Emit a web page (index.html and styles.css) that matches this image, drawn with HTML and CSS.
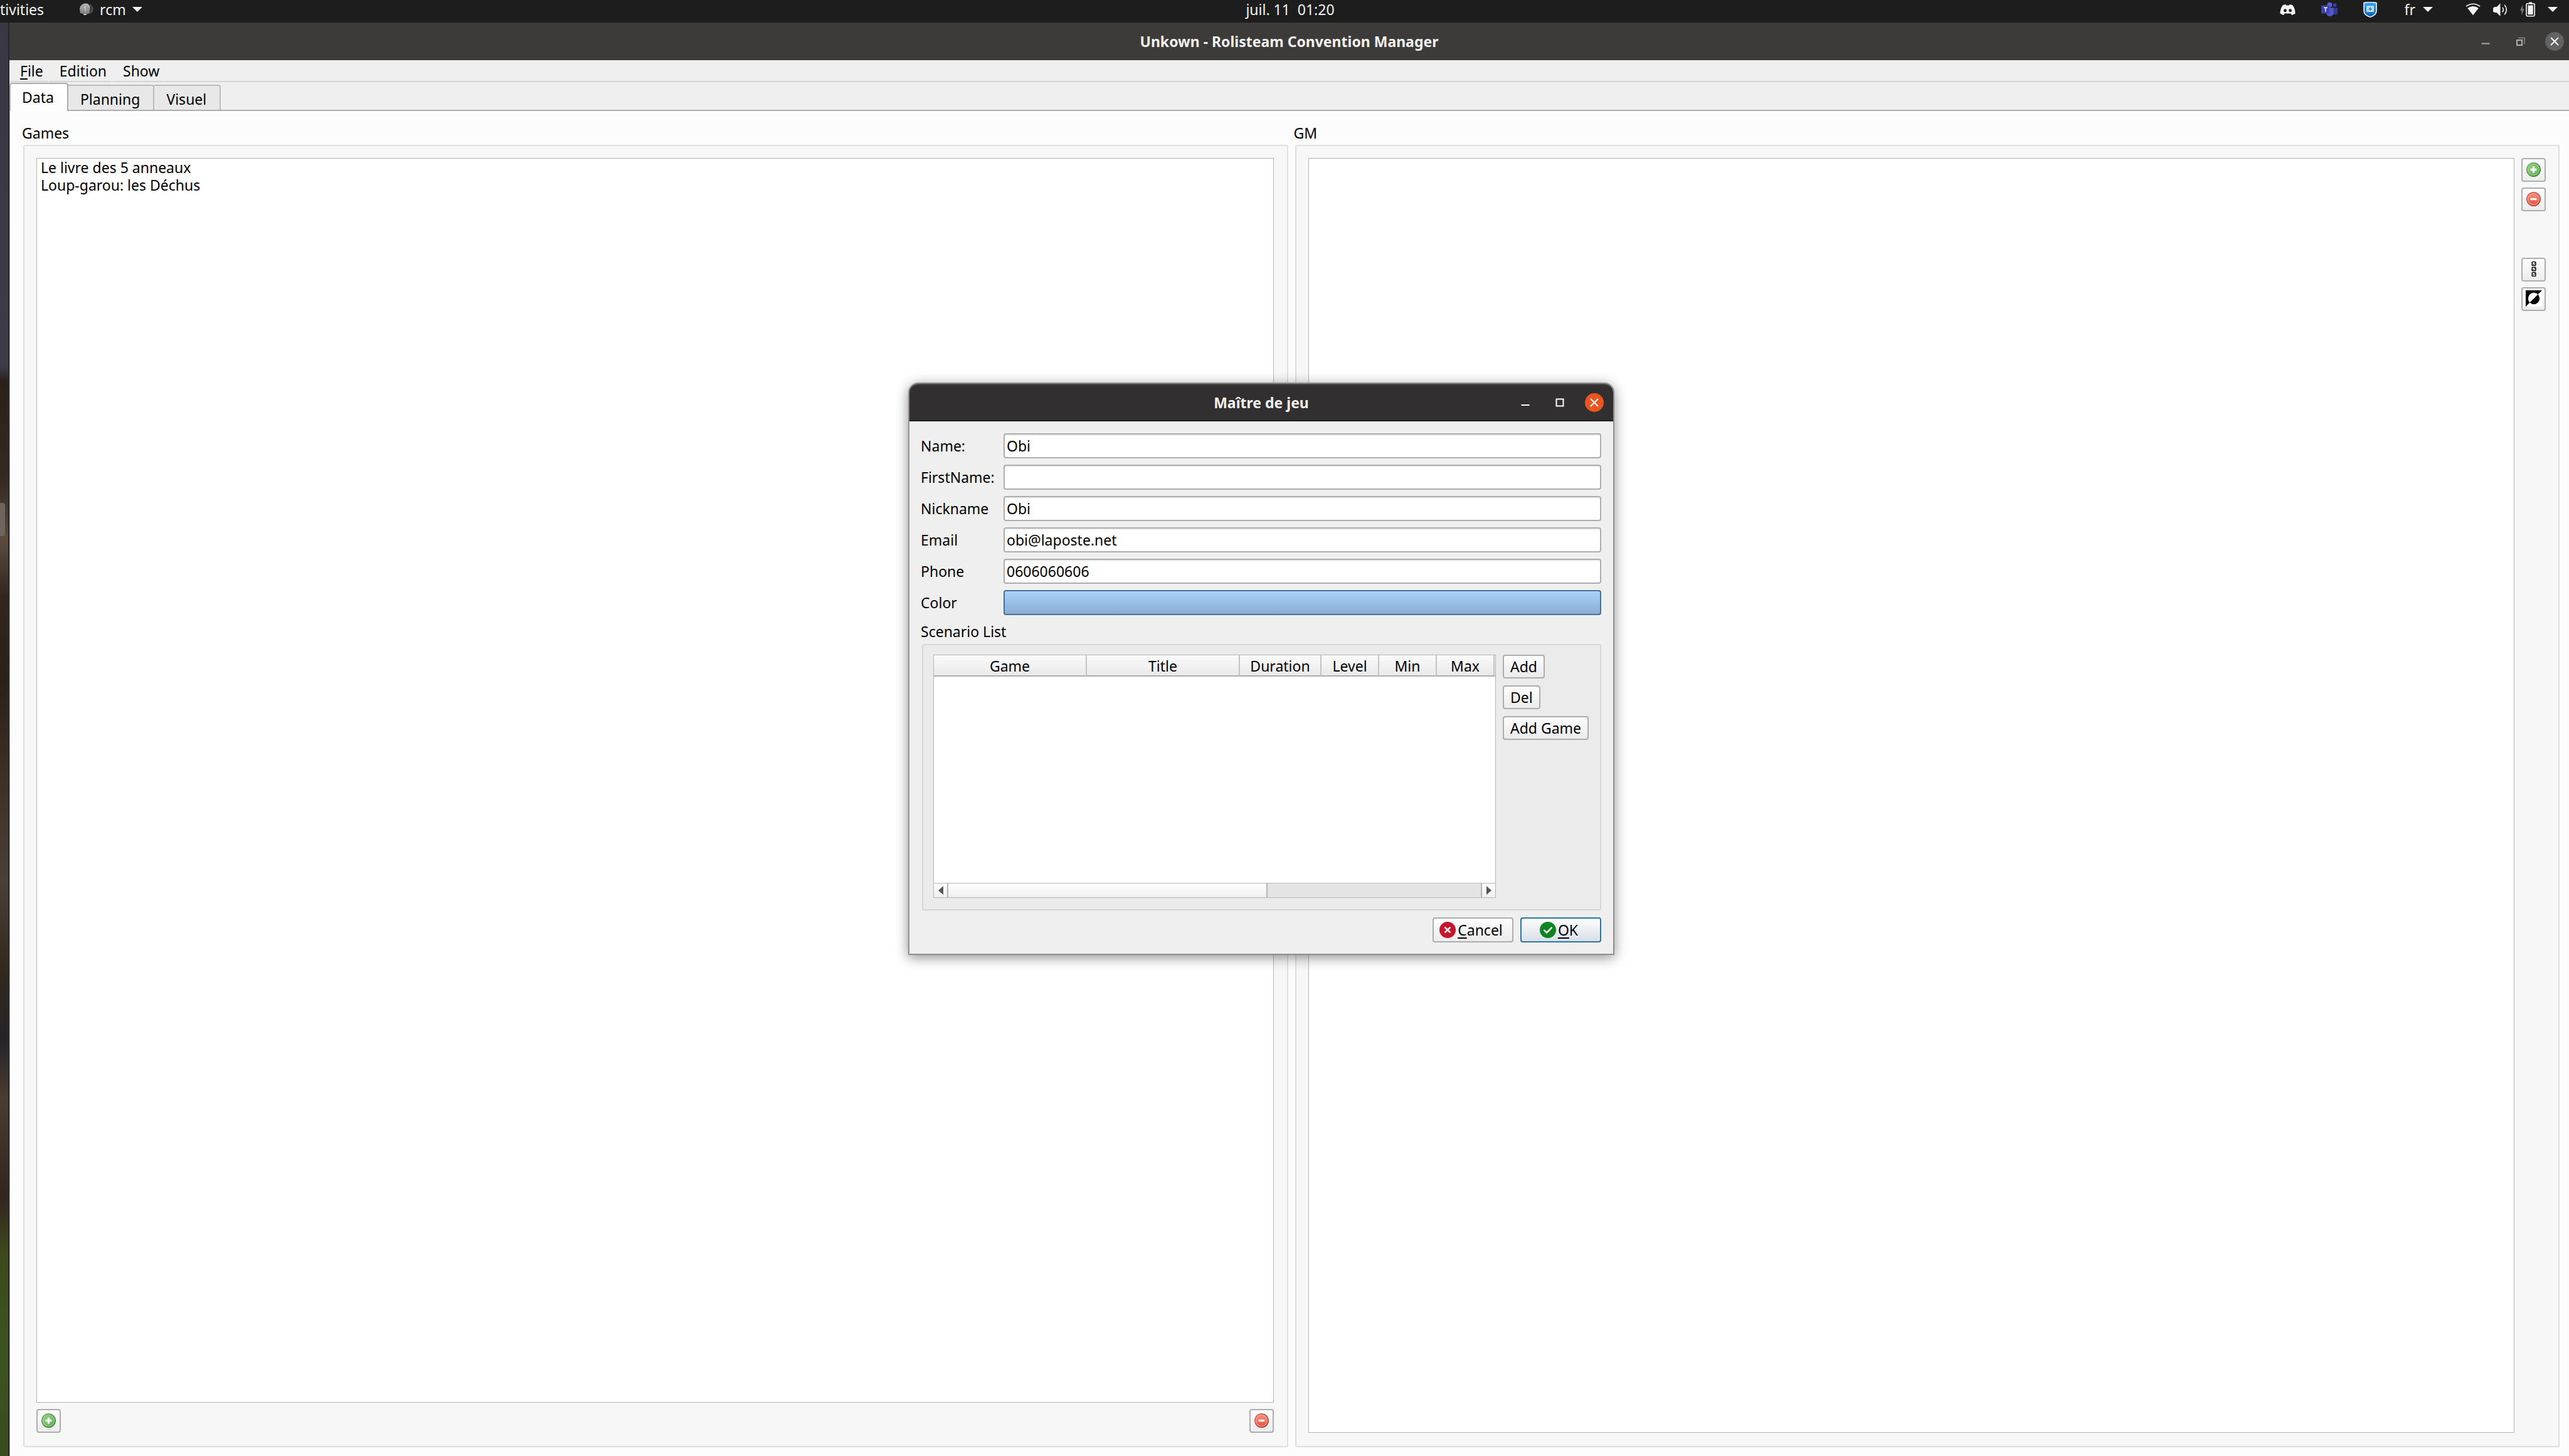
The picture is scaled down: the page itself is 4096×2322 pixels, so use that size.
FILE: index.html
```html
<!DOCTYPE html>
<html lang="fr">
<head>
<meta charset="utf-8">
<title>Unkown - Rolisteam Convention Manager</title>
<link rel="stylesheet" href="styles.css">
</head>
<body>
<svg class="defs" aria-hidden="true">
  <defs>
    <linearGradient id="green" x1="0" y1="0" x2="1" y2="1"><stop offset="0" stop-color="#7cb86c"/><stop offset="1" stop-color="#2f7d2a"/></linearGradient>
    <linearGradient id="green-in" x1="0" y1="0" x2="1" y2="1"><stop offset="0" stop-color="#8fcf84"/><stop offset="1" stop-color="#5fb04c"/></linearGradient>
    <linearGradient id="red" x1="0" y1="0" x2="1" y2="1"><stop offset="0" stop-color="#ee6a66"/><stop offset="1" stop-color="#b03a26"/></linearGradient>
    <linearGradient id="red-in" x1="0" y1="0" x2="0" y2="1"><stop offset="0" stop-color="#f9927c"/><stop offset="1" stop-color="#e8503f"/></linearGradient>
    <linearGradient id="shield" x1="0" y1="0" x2="0" y2="1"><stop offset="0" stop-color="#3aa8f4"/><stop offset="1" stop-color="#0a5fae"/></linearGradient>
    <linearGradient id="bell" x1="0" y1="0" x2="0" y2="1"><stop offset="0" stop-color="#b4b4b4"/><stop offset="1" stop-color="#777"/></linearGradient>
    <symbol id="plus" viewBox="0 0 28 28">
      <circle cx="14" cy="14" r="14" fill="url(#green)"/>
      <circle cx="14" cy="14" r="11" fill="url(#green-in)" stroke="#a8dc9c" stroke-width="1.300"/>
      <path d="M12 8h4v4h4v4h-4v4h-4v-4H8v-4h4z" fill="#fff"/>
    </symbol>
    <symbol id="minus" viewBox="0 0 28 28">
      <circle cx="14" cy="14" r="14" fill="url(#red)"/>
      <circle cx="14" cy="14" r="11" fill="url(#red-in)" stroke="#f9b4aa" stroke-width="1.300"/>
      <path d="M8 12h12v4H8z" fill="#fff"/>
    </symbol>
    <symbol id="caret" viewBox="0 0 16 8"><path d="M0 0h16L8 8z" fill="#f2f2f2"/></symbol>
  </defs>
</svg>

<div class="desktop">
  <header class="topbar">
    <div class="topbar-left">
      <span class="activities">tivities</span>
      <span class="app-menu">
        <svg class="app-icon" viewBox="0 0 27 24">
          <path d="M13 2l9 0 5 7-1 8-6 4h-6z" fill="#444"/>
          <path d="M5 3l5-3 6 1 4 5-1 13-4 2-2 2h-4l-2-2-6-2-1-8 2-5z" fill="url(#bell)"/>
          <path d="M1 10c1-6 3-8 7-8M12 2c4 1 6 3 7 8" fill="none" stroke="#d8d8d8" stroke-width="1" stroke-dasharray="2 1"/>
          <path d="M8 9l3-2v9" fill="none" stroke="#eee" stroke-width="1"/>
          <path d="M8 21h4v2H8z" fill="#eee"/>
        </svg>
        <span>rcm</span>
        <svg class="caret"><use href="#caret"/></svg>
      </span>
    </div>
    <time class="clock">juil. 11&nbsp; 01:20</time>
    <div class="topbar-right">
      <div class="tray">
        <svg class="discord" viewBox="0 0 30 21"><path d="M5 2Q8 0 11 0l1 2h6l1-2q3 0 6 2 5 8 5 16-3 2-7 3l-2-3H9l-2 3q-4-1-7-3Q0 10 5 2z" fill="#f4f4f4"/><circle cx="10" cy="12" r="3" fill="#1d1d1d"/><circle cx="20" cy="12" r="3" fill="#1d1d1d"/></svg>
        <svg class="teams" viewBox="0 0 32 28"><circle cx="26.500" cy="5.500" r="3.500" fill="#3a40a0"/><path d="M20 11h12v9q0 4-5 4h-7z" fill="#343a96"/><circle cx="16.500" cy="5" r="5" fill="#5a60d0"/><path d="M10 11h14v9q0 7-7 7.500-7-.5-7-7.500z" fill="#5158cc"/><rect y="6" width="16" height="16" rx="1" fill="#3c42b4"/><path d="M5 10.500h7M8.500 10.500v8" stroke="#fff" stroke-width="1.800" fill="none"/></svg>
        <svg class="shield" viewBox="0 0 26 30"><path d="M1 2Q13-1 25 2v15q0 8-12 12Q1 25 1 17z" fill="url(#shield)" stroke="#dff0fc" stroke-width="2"/><path d="M7 8.500h12v10H7zM7 12h12M7 15.500h12M11 8.500v10M15.500 8.500v10" fill="none" stroke="#fff" stroke-width="1.600"/><path d="M11 11.500h4.500v4H11z" fill="#1a78c8"/></svg>
      </div>
      <div class="lang"><span>fr</span><svg class="caret"><use href="#caret"/></svg></div>
      <div class="system">
        <svg class="wifi" viewBox="0 0 30 24"><path d="M1 6Q15-4 29 6" fill="none" stroke="#f2f2f2" stroke-width="2"/><path d="M4 9.500Q15 2 26 9.500L15 23.500z" fill="#f2f2f2"/></svg>
        <svg class="volume" viewBox="0 0 28 25"><path d="M0 9l3-2h4l7-7v25l-7-7H3l-3-2z" fill="#f2f2f2"/><path d="M18 8q4 4.500 0 9M22 3q8 9.500 0 19" fill="none" stroke="#f2f2f2" stroke-width="2"/></svg>
        <svg class="battery" viewBox="0 0 29 28"><path d="M5 5L0 16h3v9l5-12H5z" fill="#777"/><path d="M17 0h6v3h-6z" fill="#f2f2f2"/><rect x="12" y="3" width="16" height="24" rx="2" fill="none" stroke="#f2f2f2" stroke-width="2"/><path d="M15 6h10v18H15z" fill="#f2f2f2"/></svg>
        <svg class="caret"><use href="#caret"/></svg>
      </div>
    </div>
  </header>

  <div class="workspace">
    <div class="wallpaper"><span class="dock-item"></span></div>
    <main class="window">
      <div class="titlebar">
        <h1 class="window-title">Unkown - Rolisteam Convention Manager</h1>
        <div class="controls">
          <button class="control" aria-label="Minimize"><svg viewBox="0 0 30 30"><path d="M8.500 18.500h13" stroke="#aaa" stroke-width="2"/></svg></button>
          <button class="control" aria-label="Restore"><svg viewBox="0 0 30 30"><path d="M12 9.500h10v10" fill="none" stroke="#777" stroke-width="2"/><rect x="10" y="13" width="8" height="8" fill="none" stroke="#b0b0b0" stroke-width="2"/></svg></button>
          <button class="control close-idle" aria-label="Close"><svg viewBox="0 0 30 30"><path d="M9 9l12 12M21 9L9 21" stroke="#fff" stroke-width="2"/></svg></button>
        </div>
      </div>

      <nav class="menubar">
        <button class="menu"><u>F</u>ile</button>
        <button class="menu">Edition</button>
        <button class="menu">Show</button>
        <span class="menu-rest"></span>
      </nav>

      <div class="tabs" role="tablist">
        <button class="tab active" role="tab" aria-selected="true">Data</button>
        <button class="tab" role="tab">Planning</button>
        <button class="tab" role="tab">Visuel</button>
      </div>

      <div class="pane">
        <section class="group">
          <h2 class="group-title">Games</h2>
          <div class="group-box games">
            <ul class="list">
              <li>Le livre des 5 anneaux</li>
              <li>Loup-garou: les Déchus</li>
            </ul>
            <div class="games-actions">
              <button class="tool" aria-label="Add game"><svg class="round"><use href="#plus"/></svg></button>
              <button class="tool" aria-label="Remove game"><svg class="round"><use href="#minus"/></svg></button>
            </div>
          </div>
        </section>
        <section class="group">
          <h2 class="group-title">GM</h2>
          <div class="group-box masters">
            <ul class="list"></ul>
            <div class="masters-actions">
              <button class="tool" aria-label="Add GM"><svg class="round"><use href="#plus"/></svg></button>
              <button class="tool" aria-label="Remove GM"><svg class="round"><use href="#minus"/></svg></button>
              <span class="tool-space"></span>
              <button class="tool" aria-label="Select all">
                <svg class="square" viewBox="0 0 32 32"><g fill="none" stroke="#000" stroke-width="1.800"><rect x="12.500" y="2" width="7" height="7" rx="1"/><rect x="12.500" y="12.500" width="7" height="7" rx="1"/><rect x="12.500" y="23" width="7" height="7" rx="1"/><path d="M14 5.500l1.500 1.500 3-3.500M14 16l1.500 1.500 3-3.500M14 26.500l1.500 1.500 3-3.500" stroke-width="1"/></g></svg>
              </button>
              <button class="tool" aria-label="Invert selection">
                <svg class="square" viewBox="0 0 32 32"><path d="M0 0h32v32H0z" fill="#fff"/><path d="M0 0h32L0 32z" fill="#000"/><path d="M8 24A11.300 11.300 0 0 1 24 8z" fill="#fff"/><path d="M8 24A11.300 11.300 0 0 0 24 8z" fill="#000"/></svg>
              </button>
            </div>
          </div>
        </section>
      </div>
    </main>
  </div>

  <form class="dialog" role="dialog" aria-labelledby="dialog-title">
    <div class="titlebar dialog-titlebar">
      <h2 class="window-title" id="dialog-title">Maître de jeu</h2>
      <div class="controls">
        <button type="button" class="control" aria-label="Minimize"><svg viewBox="0 0 30 30"><path d="M8.500 19h13" stroke="#fff" stroke-width="2"/></svg></button>
        <button type="button" class="control" aria-label="Maximize"><svg viewBox="0 0 30 30"><rect x="9.500" y="9.500" width="11" height="11" fill="none" stroke="#fff" stroke-width="2"/></svg></button>
        <button type="button" class="control close" aria-label="Close"><svg viewBox="0 0 30 30"><path d="M9 9l12 12M21 9L9 21" stroke="#fff" stroke-width="2"/></svg></button>
      </div>
    </div>
    <div class="dialog-body">
      <div class="fields">
        <label for="name">Name:</label><input class="field" id="name" type="text" value="Obi">
        <label for="firstname">FirstName:</label><input class="field" id="firstname" type="text">
        <label for="nickname">Nickname</label><input class="field" id="nickname" type="text" value="Obi">
        <label for="email">Email</label><input class="field" id="email" type="text" value="obi@laposte.net">
        <label for="phone">Phone</label><input class="field" id="phone" type="text" value="0606060606">
        <label for="color">Color</label><button type="button" class="color" id="color"></button>
      </div>
      <h3 class="scenario-title">Scenario List</h3>
      <div class="scenario-box">
        <div class="scenario-view">
          <table class="scenarios">
            <colgroup><col class="col-wide"><col class="col-wide"><col class="col-duration"><col class="col-num"><col class="col-num"><col class="col-num"><col></colgroup>
            <thead><tr><th>Game</th><th>Title</th><th>Duration</th><th>Level</th><th>Min</th><th>Max</th><th></th></tr></thead>
          </table>
          <div class="scrollbar">
            <button type="button" class="scroll-arrow arrow-left" aria-label="Scroll left"><svg viewBox="0 0 8 14"><path d="M8 0v14L0 7z" fill="#555"/></svg></button>
            <div class="scroll-track"><div class="scroll-thumb"></div></div>
            <button type="button" class="scroll-arrow arrow-right" aria-label="Scroll right"><svg viewBox="0 0 8 14"><path d="M0 0v14l8-7z" fill="#555"/></svg></button>
          </div>
        </div>
        <div class="scenario-actions">
          <button type="button" class="push">Add</button>
          <button type="button" class="push">Del</button>
          <button type="button" class="push">Add Game</button>
        </div>
      </div>
      <div class="dialog-buttons">
        <button type="button" class="push answer">
          <svg class="answer-icon" viewBox="0 0 32 32"><circle cx="16" cy="16" r="16" fill="#c7162b"/><path d="M10.500 10.500l11 11M21.500 10.500l-11 11" stroke="#fff" stroke-width="3"/></svg>
          <span><u>C</u>ancel</span>
        </button>
        <button type="submit" class="push answer default">
          <svg class="answer-icon" viewBox="0 0 32 32"><circle cx="16" cy="16" r="16" fill="#0e8420"/><path d="M8 16l5.500 5.500L24 11" fill="none" stroke="#fff" stroke-width="3"/></svg>
          <span><u>O</u>K</span>
        </button>
      </div>
    </div>
  </form>
</div>
</body>
</html>
```
FILE: styles.css
```css
* { box-sizing: border-box; }

html, body { height: 100%; margin: 0; }

body {
  overflow: hidden;
  font: 23px/30px "Noto Sans", "Open Sans", sans-serif;
  color: #000;
}

h1, h2, h3, ul { margin: 0; padding: 0; font: inherit; }
button, input { font: inherit; color: inherit; margin: 0; padding: 0; }
svg { display: block; flex: none; }
u { text-decoration-thickness: 2px; text-underline-offset: 3px; text-decoration-skip-ink: none; }
.defs { position: absolute; width: 0; height: 0; }

.desktop {
  position: relative;
  display: flex;
  flex-direction: column;
  min-height: 100vh;
}

/* Top bar */
.topbar {
  display: grid;
  grid-template-columns: 1fr auto 1fr;
  height: 36px;
  padding-bottom: 6px;
  background: #1d1d1d;
  color: #f2f2f2;
}
.topbar-left, .topbar-right, .app-menu, .tray, .lang, .system { display: flex; align-items: center; }
.topbar-left { gap: 57px; }
.app-menu { gap: 10px; }
.clock { padding-left: 18px; }
.topbar-right { justify-content: flex-end; gap: 52px; padding-right: 18px; }
.tray { gap: 41px; margin-right: -8px; }
.lang { gap: 12px; }
.system { gap: 20px; }
.app-icon { width: 22px; height: 20px; }
.caret { width: 16px; height: 8px; }
.discord { width: 25px; height: 17px; }
.teams { width: 26px; height: 24px; }
.shield { width: 22px; height: 25px; }
.wifi { width: 24px; height: 20px; }
.volume { width: 23px; height: 21px; }
.battery { width: 24px; height: 24px; }

/* Main window */
.workspace { display: flex; flex: 1; }
.wallpaper {
  width: 15px;
  border-right: 2px solid #26252a;
  background: linear-gradient(#393744 0, #3f3c49 24%, #2b211b 25%, #352a22 32%, #5c4c40 36%, #33261e 40%, #2a2119 46%, #3d2e24 52%, #4a4038 60%, #33291c 66%, #26242a 71%, #4a3c30 75%, #33261f 82%, #3d4a1c 86%, #3d5420 93%, #3a4a20 100%);
}
.dock-item { display: block; width: 8px; height: 53px; margin-top: 766px; background: #6e665e; border-radius: 0 4px 4px 0; }
.window { display: flex; flex: 1; flex-direction: column; min-width: 0; background: #efefef; }

.titlebar {
  display: grid;
  grid-template-columns: 1fr auto 1fr;
  align-items: center;
  height: 60px;
  padding: 0 8px;
  background: #3d3b39;
  color: #f2f2f2;
}
.window-title { grid-column: 2; font-weight: 700; }
.controls { display: flex; justify-content: flex-end; gap: 25px; }
.control { width: 30px; height: 30px; border: 0; border-radius: 50%; background: none; }
.control svg { width: 30px; height: 30px; }
.close-idle { background: #626262; }
.close { background: #e95420; }

.menubar { display: flex; gap: 1px; height: 35px; }
.menu { padding: 0 8px 0 17px; border: 0; border-bottom: 2px solid #d4d4d4; background: none; }
.menu-rest { flex: 1; border-bottom: 2px solid #d4d4d4; }

.tabs { display: flex; align-items: flex-end; height: 46px; border-bottom: 2px solid #adadad; }
.tab {
  height: 40px;
  padding: 4px 21px 0 19px;
  border: 2px solid #bbb;
  border-bottom: 0;
  border-left-width: 0;
  border-radius: 0 4px 0 0;
  background: #e8e8e8;
  line-height: 30px;
}
.tab.active {
  height: 45px;
  margin-bottom: -2px;
  padding: 2px 21px 3px 18px;
  border-color: #adadad;
  border-left-width: 2px;
  border-radius: 4px 4px 0 0;
  background: linear-gradient(#fff, #fcfcfc);
}

.pane {
  display: flex;
  flex: 1;
  gap: 11px;
  padding: 20px 15px 14px 21px;
  border-left: 1px solid #aaa;
  background: #fcfcfc;
}
.group { display: flex; flex: 1; flex-direction: column; min-width: 0; gap: 4px; }
.group-title, .scenario-title { margin-left: -2px; line-height: 30px; }
.group-box {
  display: flex;
  flex: 1;
  padding: 19px 20px 21px 19px;
  border: 2px solid #dfdfdf;
  border-radius: 3px;
  background: #f7f7f7;
}
.list { flex: 1; padding-left: 6px; border: 1px solid #b5b5b5; background: #fff; line-height: 28px; list-style: none; }
.games { flex-direction: column; gap: 10px; padding-right: 21px; }
.games-actions { display: flex; justify-content: space-between; }
.masters { gap: 11px; }
.masters-actions { display: flex; flex-direction: column; gap: 9px; }
.tool-space { height: 56px; }

.tool, .push {
  display: flex;
  align-items: center;
  justify-content: center;
  height: 38px;
  border: 2px solid #adadad;
  border-radius: 4px;
  background: linear-gradient(#fdfdfd, #ececec);
}
.tool { width: 39px; padding-bottom: 2px; }
.round { width: 23px; height: 23px; }
.square { width: 26px; height: 26px; }

/* Dialog window */
.dialog {
  position: absolute;
  top: 612px;
  left: 1450px;
  width: 1122px;
  border-radius: 14px 14px 0 0;
  background: #efefef;
  box-shadow: 0 0 0 2px #8e8e8e, 0 4px 20px 2px rgba(0, 0, 0, .45);
}
.dialog-titlebar {
  padding: 0 15px;
  border-top: 2px solid #484646;
  border-bottom: 2px solid #211f20;
  border-radius: 14px 14px 0 0;
  background: #322f30;
}
.dialog-body { padding: 19px 19px 18px 20px; }
.fields { display: grid; grid-template-columns: 132px 1fr; gap: 10px 0; align-items: center; margin-left: -2px; }
.field {
  width: 100%;
  height: 40px;
  padding: 0 3px;
  border: 2px solid #adadad;
  border-radius: 4px;
  background: #fff;
  box-shadow: inset 0 2px 0 #eee;
}
.color {
  height: 40px;
  border: 2px solid #4d6f96;
  border-radius: 4px;
  background: linear-gradient(#a8d3fb, #8aacd3);
}
.scenario-title { margin-top: 11px; }
.scenario-box {
  display: flex;
  gap: 11px;
  margin-top: 5px;
  padding: 15px 17px 18px 16px;
  border: 2px solid #d6d6d6;
  border-radius: 3px;
  background: #ebebeb;
}
.scenario-view {
  display: flex;
  flex: 1;
  flex-direction: column;
  justify-content: space-between;
  height: 388px;
  border: 1px solid #b5b5b5;
  background: #fff;
}
.scenarios { width: 100%; table-layout: fixed; border-collapse: separate; border-spacing: 0; }
.scenarios th {
  height: 34px;
  padding: 2px 0 0;
  border-right: 2px solid #c4c4c4;
  border-bottom: 2px solid #adadad;
  background: linear-gradient(#fbfbfb, #e9e9e9);
  font-weight: 400;
}
.scenarios th:last-child { border-right: 0; }
.col-wide { width: 244px; }
.col-duration { width: 130px; }
.col-num { width: 92px; }

.scrollbar { display: flex; height: 23px; border-top: 1px solid #b5b5b5; }
.scroll-arrow {
  display: flex;
  align-items: center;
  justify-content: center;
  width: 23px;
  border: 0 solid #b5b5b5;
  background: linear-gradient(#fdfdfd, #f0f0f0);
}
.scroll-arrow svg { width: 8px; height: 14px; }
.arrow-left { border-right-width: 2px; }
.arrow-right { border-left-width: 2px; }
.scroll-track { flex: 1; background: #e4e4e4; }
.scroll-thumb { width: 60%; height: 100%; border-right: 2px solid #b5b5b5; background: linear-gradient(#fff, #f0f0f0); }

.scenario-actions { display: flex; flex-direction: column; align-items: flex-start; gap: 11px; width: 138px; }
.push { padding: 0 10px; }
.dialog-buttons { display: flex; justify-content: flex-end; gap: 11px; margin-top: 11px; }
.answer { gap: 3px; width: 129px; height: 40px; padding: 0 6px 0 0; }
.answer-icon { width: 26px; height: 26px; }
.default { border-color: #2a76a8; background: linear-gradient(#fdfdfd, #d8dfe8); }
```
